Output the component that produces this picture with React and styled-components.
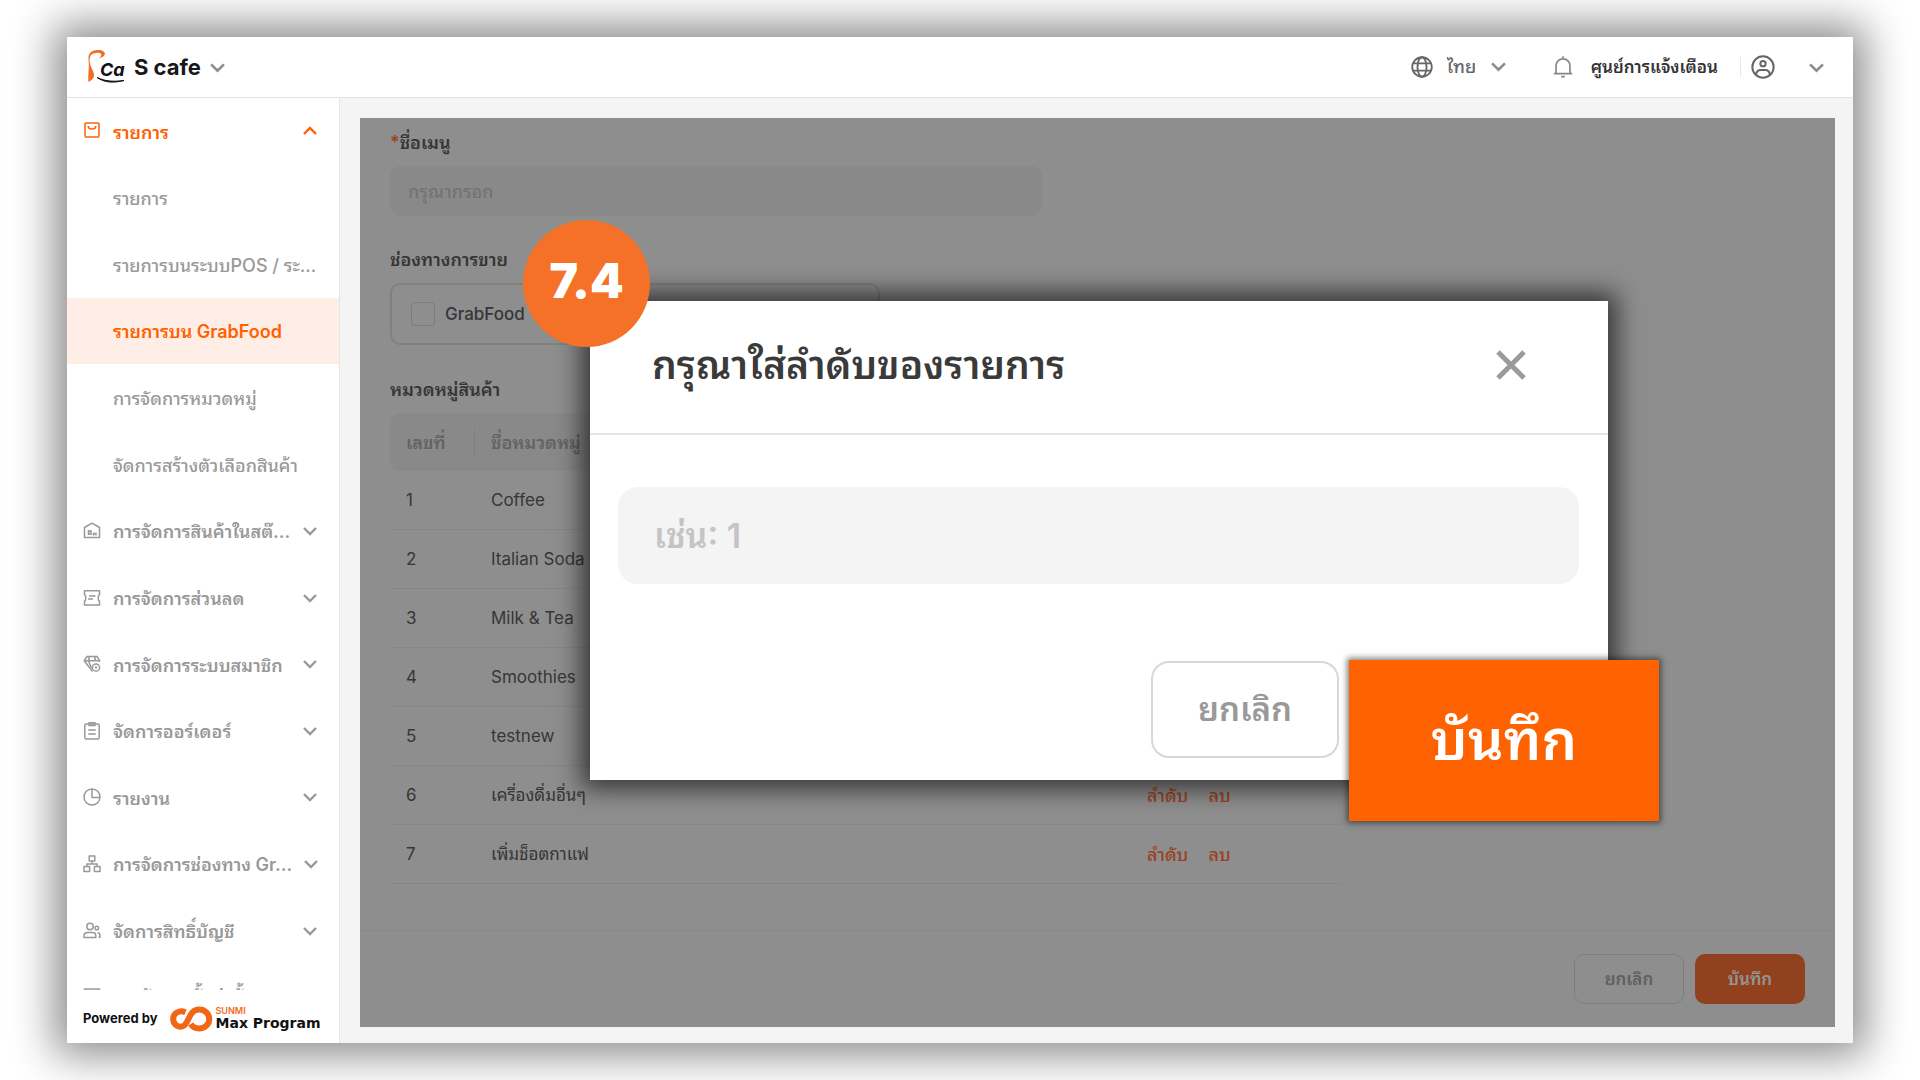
import React from 'react';
import styled, { createGlobalStyle } from 'styled-components';

const GlobalStyle = createGlobalStyle`
  *, *::before, *::after { box-sizing: border-box; }
  html, body, #root { height: 100%; }
  body {
    margin: 0;
    background: #fff;
    font-family: Inter, "Noto Sans Thai Looped", Loma, Umpush, Waree, Garuda, "Noto Sans Thai", "Noto Sans", sans-serif;
    font-size: 18px;
    line-height: 1.3;
    color: #363636;
    overflow: hidden;
  }
  button, input, select { font: inherit; color: inherit; margin: 0; }
  button { cursor: pointer; }
  h2, p { margin: 0; }
`;

const Page = styled.div`
  position: relative;
  height: 100%;
  padding: 37px 67px;
`;

const AppWindow = styled.div`
  display: flex;
  flex-direction: column;
  height: 100%;
  background: #fff;
  box-shadow: 0 0 40px 12px rgba(0, 0, 0, 0.46);
`;

const Header = styled.header`
  display: flex;
  align-items: center;
  justify-content: space-between;
  flex: 0 0 61px;
  padding: 0 29px 0 20px;
  border-bottom: 1px solid #e2e2e2;
`;

const PlainButton = styled.button`
  display: flex;
  align-items: center;
  gap: ${(p) => p.$gap || 0}px;
  padding: 0;
  border: 0;
  background: none;
  color: ${(p) => p.$color || 'inherit'};
  font-size: 17px;
  font-weight: ${(p) => p.$weight || 500};
`;

const StoreName = styled.span`
  font-size: 22px;
  font-weight: 700;
  color: #17181a;
`;

const HeaderActions = styled.div`
  display: flex;
  align-items: center;
`;

const Language = styled.label`
  display: flex;
  align-items: center;
  gap: 14px;
  color: #666;
  margin-right: 46px;
`;

const LanguageSelect = styled.select`
  appearance: none;
  width: 30px;
  padding: 0;
  border: 0;
  background: none;
  font-weight: 500;
`;

const Divider = styled.span`
  width: 1px;
  height: 20px;
  margin: 0 10px 0 22px;
  background: #e8e8e8;
`;

const Body = styled.div`
  display: flex;
  flex: 1;
  min-height: 0;
`;

const Sidebar = styled.aside`
  display: flex;
  flex-direction: column;
  flex: 0 0 273px;
  border-right: 1px solid #e6e6e6;
`;

const Nav = styled.nav`
  display: grid;
  grid-template-rows: repeat(13, minmax(0, 1fr)) 26px;
  flex: 1;
  min-height: 0;
`;

const NavItem = styled.a`
  display: grid;
  grid-template-columns: 18px 1fr 14px;
  align-items: center;
  column-gap: 12px;
  padding: 0 22px 0 16px;
  overflow: hidden;
  white-space: nowrap;
  text-decoration: none;
  font-weight: ${(p) => (p.$sub ? 500 : 600)};
  color: ${(p) => (p.$active ? '#ff6000' : '#999')};
  background: ${(p) => (p.$selected ? '#ffeee5' : 'transparent')};
  ${(p) => p.$selected && 'font-weight: 600;'}
  ${(p) => p.$clipped && 'align-items: start; line-height: 26px; padding-top: 18px;'}
`;

const NavText = styled.span`
  grid-column: 2 / ${(p) => (p.$wide ? 4 : 3)};
  padding-top: 2px;
`;

const Powered = styled.footer`
  display: flex;
  align-items: center;
  gap: 12px;
  flex: 0 0 53px;
  padding: 4px 0 0 16px;
  font-size: 13px;
  font-weight: 700;
  color: #111;
`;

const Brand = styled.div`
  display: flex;
  align-items: center;
  gap: 2px;
`;

const BrandText = styled.div`
  display: flex;
  flex-direction: column;
  font-family: "DejaVu Sans", sans-serif;
  font-size: 14px;
  line-height: 16px;
  font-weight: 700;
`;

const BrandSmall = styled.span`
  font-family: Inter, sans-serif;
  font-size: 9px;
  line-height: 8px;
  font-weight: 600;
  color: #f26a1b;
`;

const Main = styled.main`
  display: flex;
  flex: 1;
  min-width: 0;
  padding: 20px 18px 16px 20px;
  background: #f4f4f4;
`;

const Panel = styled.section`
  display: flex;
  flex-direction: column;
  flex: 1;
  min-width: 0;
  background: #8e8e8e;
  color: #363636;
`;

const Form = styled.form`
  flex: 1;
  padding: 12px 30px 0;
`;

const Label = styled.label`
  display: block;
  height: 26px;
  line-height: 26px;
  font-weight: 600;
`;

const Required = styled.span`
  color: #a1431a;
`;

const MenuInput = styled.input`
  display: block;
  width: 652px;
  height: 50px;
  margin: 10px 0 31px;
  padding: 0 18px;
  border: 0;
  border-radius: 10px;
  background: #898989;
  font-weight: 500;
  &::placeholder { color: #737373; opacity: 1; }
`;

const Channel = styled.label`
  display: flex;
  align-items: center;
  gap: 10px;
  width: 490px;
  height: 62px;
  margin: 10px 0 32px;
  padding: 0 19px;
  border: 2px solid #808080;
  border-radius: 10px;
  font-size: 17px;
  font-weight: 500;
`;

const Check = styled.input`
  appearance: none;
  width: 24px;
  height: 24px;
  border: 1px solid #7c7c7c;
  border-radius: 4px;
`;

const Table = styled.table`
  width: 952px;
  margin-top: 10px;
  border-collapse: separate;
  border-spacing: 0;
  table-layout: fixed;
`;

const Th = styled.th`
  width: ${(p) => p.$width};
  height: 58px;
  padding: 2px 16px 0;
  background: #898989;
  color: #636363;
  font-weight: 600;
  text-align: left;
  &:first-child {
    border-radius: 10px 0 0 10px;
    background: linear-gradient(#808080, #808080) right center / 1px 28px no-repeat #898989;
  }
  &:last-child { border-radius: 0 10px 10px 0; }
`;

const Td = styled.td`
  height: 59px;
  padding: 1px 16px 0;
  border-bottom: 1px solid #868686;
  font-size: 17px;
  font-weight: 400;
`;

const RowLink = styled.a`
  margin-right: 20px;
  font-size: 18px;
  font-weight: 500;
  color: #96441f;
  text-decoration: none;
`;

const PanelFooter = styled.footer`
  display: flex;
  justify-content: flex-end;
  gap: 11px;
  padding: 23px 30px;
  border-top: 1px solid #888;
`;

const FooterButton = styled.button`
  width: 110px;
  height: 50px;
  padding: 0;
  border: ${(p) => (p.$primary ? '0' : '1px solid #7d7d7d')};
  border-radius: 10px;
  background: ${(p) => (p.$primary ? '#91411d' : 'transparent')};
  color: ${(p) => (p.$primary ? '#959595' : '#606060')};
  font-size: 17px;
  font-weight: 600;
`;

const Modal = styled.div`
  position: absolute;
  top: 301px;
  left: 590px;
  right: 312px;
  height: 479px;
  display: flex;
  flex-direction: column;
  background: #fff;
  box-shadow: 0 0 24px 8px rgba(0, 0, 0, 0.65);
`;

const ModalHeader = styled.div`
  display: flex;
  align-items: center;
  justify-content: space-between;
  flex: 0 0 134px;
  padding: 0 81px 4px 62px;
  border-bottom: 2px solid #e6e6e6;
`;

const ModalTitle = styled.h2`
  font-size: 39px;
  font-weight: 600;
  color: #3a3a3a;
`;

const OrderInput = styled.input`
  height: 97px;
  margin: 52px 29px 77px 28px;
  padding: 0 36px;
  border: 0;
  border-radius: 20px;
  background: #f4f4f4;
  font-size: 34px;
  font-weight: 600;
  &::placeholder { color: #c4c4c4; opacity: 1; }
`;

const CancelButton = styled.button`
  align-self: flex-end;
  width: 188px;
  height: 97px;
  margin-right: 269px;
  border: 2px solid #d8d8d8;
  border-radius: 18px;
  background: #fff;
  color: #999;
  font-size: 33px;
  font-weight: 600;
`;

const SaveButton = styled.button`
  position: absolute;
  right: -51px;
  bottom: -41px;
  width: 310px;
  height: 161px;
  border: 0;
  background: #ff6200;
  box-shadow: 0 0 6px 2px rgba(0, 0, 0, 0.5);
  color: #fff;
  font-size: 56px;
  font-weight: 600;
`;

const StepBadge = styled.div`
  position: absolute;
  top: 220px;
  left: 523px;
  display: grid;
  place-items: center;
  width: 127px;
  height: 127px;
  padding-bottom: 4px;
  border-radius: 50%;
  background: #f47127;
  color: #fff;
  font-size: 48px;
  font-weight: 900;
`;

const Icon = ({ size = 18, width = 1.5, children, color = 'currentColor' }) => (
  <svg width={size} height={size} viewBox="0 0 18 18" fill="none" stroke={color} strokeWidth={width} strokeLinejoin="round" aria-hidden="true">
    {children}
  </svg>
);

const Chevron = ({ up, size = 14, color = 'currentColor' }) => (
  <svg width={size} height={size} viewBox="0 0 14 14" fill="none" stroke={color} strokeWidth="2.4" aria-hidden="true">
    <path d={up ? 'M1 10l6-6 6 6' : 'M1 4l6 6 6-6'} />
  </svg>
);

const icons = {
  bag: <><rect x="2" y="1" width="14" height="14" rx="1" /><path d="M5.500 4v1c0 1.200 1.500 2 3.500 2s3.500-.8 3.500-2V4" /></>,
  store: <><path d="M1.500 15.500v-10L9 1.200l7.500 4.300v10z" /><path d="M5 9h3M5 12h3M10.500 12H13M5.500 8v5M8 8v5M10.500 10.500v3M13 10.500v3" /></>,
  coupon: <><path d="M1.500 1.800h15v3.700c-1.700.8-1.700 6 0 6.800V16h-15v-3.700c1.700-.8 1.700-6 0-6.800z" /><path d="M6 7h6.500M5 10h5" /></>,
  gem: <><path d="M9.500 16.500L1.200 5.800 4 1.500h10l2.800 4.300-.8 1M1.200 5.800h15.600M6.500 1.500L5.500 6l3 7M11.500 1.500l1 4" /><circle cx="13" cy="12.500" r="3.600" /><circle cx="13" cy="12.500" r=".5" /></>,
  orders: <><rect x="1.800" y="2" width="14.400" height="15" rx="1.500" /><path d="M6 .8h6v2.700H6zM5.200 8h7.600M5.200 12h7.600" /></>,
  report: <><circle cx="9" cy="9" r="8" /><path d="M9 1v8.500h8" /></>,
  channel: <><rect x="6.200" y="1" width="5.600" height="5" /><rect x="1" y="11.500" width="5.600" height="5" /><rect x="11.400" y="11.500" width="5.600" height="5" /><path d="M9 6v3M3.800 11.500V9h10.400v2.500" /></>,
  users: <><circle cx="7" cy="4.500" r="3.200" /><path d="M1 15.500v-1.700c0-2 1.500-3.300 3.500-3.300h5c2 0 3.300 1.300 3.300 3.300v1.700z" /><circle cx="13.800" cy="6" r="1.800" /><path d="M14.500 10.500c1.700.3 2.500 1.500 2.500 3v1.700h-1.500" /></>,
  box: <path d="M1.500 18V7h15v11" />,
};

const menu = [
  { text: 'รายการ', icon: 'bag', active: true, up: true },
  { text: 'รายการ', sub: true },
  { text: 'รายการบนระบบPOS / ระ...', sub: true },
  { text: 'รายการบน GrabFood', sub: true, active: true, selected: true },
  { text: 'การจัดการหมวดหมู่', sub: true },
  { text: 'จัดการสร้างตัวเลือกสินค้า', sub: true },
  { text: 'การจัดการสินค้าในสต๊...', icon: 'store' },
  { text: 'การจัดการส่วนลด', icon: 'coupon' },
  { text: 'การจัดการระบบสมาชิก', icon: 'gem' },
  { text: 'จัดการออร์เดอร์', icon: 'orders' },
  { text: 'รายงาน', icon: 'report' },
  { text: 'การจัดการช่องทาง Gr...', icon: 'channel' },
  { text: 'จัดการสิทธิ์บัญชี', icon: 'users' },
  { text: 'การจัดการตั้งค่าทั้งหมด', icon: 'box', clipped: true },
];

const categories = ['Coffee', 'Italian Soda', 'Milk & Tea', 'Smoothies', 'testnew', 'เครื่องดื่มอื่นๆ', 'เพิ่มช็อตกาแฟ'];

const StoreLogo = () => (
  <svg width="38" height="36" viewBox="0 0 38 36" aria-hidden="true">
    <path d="M1.500 33C.8 25 2.500 20 1.500 10 1 4 5 1 11 1c4 0 7 1.500 6.800 4-.3 2.500-3.500 4-6 3.800 2-1 3.200-2.600 2-4C12 3 6 3.500 3.500 6.500 1.800 11 2.500 15 5 20c3.500 6 2.500 10-3.500 13z" fill="#f36c1f" />
    <text x="13" y="27" fontFamily="Inter, sans-serif" fontStyle="italic" fontWeight="700" fontSize="18" fill="#111">Ca</text>
    <path d="M10 28.500c8 5.500 17 5.500 27 3-10 1.200-18 1.200-27-3z" fill="#111" stroke="#111" strokeWidth="1" />
  </svg>
);

const BrandLogo = () => (
  <svg width="44" height="26" viewBox="0 0 44 26" fill="none" stroke="#f26716" strokeWidth="6" aria-hidden="true">
    <path d="M15.500 6.200C9 3.500 3.200 7.500 3.200 13c0 6 5.500 9 10 7 6-2.500 5.500-16.500 16-16.500 5.500 0 10 4 10 9.500s-4.500 9.500-10 9.500c-4 0-7-2-8.500-4.500" />
  </svg>
);

export default function App() {
  return (
    <Page>
      <GlobalStyle />
      <AppWindow>
        <Header>
          <PlainButton type="button" $gap={9} $color="#8c8c8c">
            <StoreLogo />
            <StoreName>S cafe</StoreName>
            <Chevron size={15} />
          </PlainButton>
          <HeaderActions>
            <Language>
              <Icon size={22} width={1.5}>
                <circle cx="9" cy="9" r="8" />
                <ellipse cx="9" cy="9" rx="3.700" ry="8" />
                <path d="M1.700 6h14.600M1.700 12h14.600" />
              </Icon>
              <LanguageSelect aria-label="ภาษา" defaultValue="th">
                <option value="th">ไทย</option>
              </LanguageSelect>
              <Chevron size={15} color="#8c8c8c" />
            </Language>
            <PlainButton type="button" $gap={17} $color="#333" $weight={600}>
              <Icon size={22} width={1.400} color="#888">
                <path d="M1.500 14.500h15M3.300 14.500V8.300C3.300 4.800 5.700 2.300 9 2.300s5.700 2.500 5.700 6v6.200M9 .3v2M7.500 16.800h3" />
              </Icon>
              ศูนย์การแจ้งเตือน
            </PlainButton>
            <Divider />
            <PlainButton type="button" aria-label="บัญชีผู้ใช้" $gap={34} $color="#666">
              <Icon size={24} width={1.500}>
                <circle cx="9" cy="9" r="8" />
                <circle cx="9" cy="6.500" r="2" />
                <path d="M3.800 14.800c.3-2.500 1.500-3.500 3.500-3.500h3.400c2 0 3.200 1 3.500 3.500" />
              </Icon>
              <Chevron size={15} color="#8c8c8c" />
            </PlainButton>
          </HeaderActions>
        </Header>
        <Body>
          <Sidebar>
            <Nav>
              {menu.map((m, i) => (
                <NavItem key={i} href="#" $sub={m.sub} $active={m.active} $selected={m.selected} $clipped={m.clipped}>
                  {m.icon && <Icon size={18}>{icons[m.icon]}</Icon>}
                  <NavText $wide={m.sub}>{m.text}</NavText>
                  {!m.sub && !m.clipped && <Chevron up={m.up} />}
                </NavItem>
              ))}
            </Nav>
            <Powered>
              Powered by
              <Brand>
                <BrandLogo />
                <BrandText>
                  <BrandSmall>SUNMI</BrandSmall>
                  Max Program
                </BrandText>
              </Brand>
            </Powered>
          </Sidebar>
          <Main>
            <Panel>
              <Form onSubmit={(e) => e.preventDefault()}>
                <Label htmlFor="menu-name"><Required>*</Required>ชื่อเมนู</Label>
                <MenuInput id="menu-name" placeholder="กรุณากรอก" />
                <Label as="p">ช่องทางการขาย</Label>
                <Channel>
                  <Check type="checkbox" />
                  GrabFood
                </Channel>
                <Label as="p">หมวดหมู่สินค้า</Label>
                <Table>
                  <thead>
                    <tr>
                      <Th $width="85px">เลขที่</Th>
                      <Th $width="656px">ชื่อหมวดหมู่</Th>
                      <Th />
                    </tr>
                  </thead>
                  <tbody>
                    {categories.map((name, i) => (
                      <tr key={name}>
                        <Td>{i + 1}</Td>
                        <Td>{name}</Td>
                        <Td>
                          <RowLink href="#">ลำดับ</RowLink>
                          <RowLink href="#">ลบ</RowLink>
                        </Td>
                      </tr>
                    ))}
                  </tbody>
                </Table>
              </Form>
              <PanelFooter>
                <FooterButton type="button">ยกเลิก</FooterButton>
                <FooterButton type="button" $primary>บันทึก</FooterButton>
              </PanelFooter>
            </Panel>
          </Main>
        </Body>
      </AppWindow>
      <Modal role="dialog" aria-labelledby="order-title">
        <ModalHeader>
          <ModalTitle id="order-title">กรุณาใส่ลำดับของรายการ</ModalTitle>
          <PlainButton type="button" aria-label="ปิด" $color="#9b9999">
            <svg width="32" height="32" viewBox="0 0 32 32" stroke="currentColor" strokeWidth="5" aria-hidden="true">
              <path d="M3 3l26 26M29 3L3 29" />
            </svg>
          </PlainButton>
        </ModalHeader>
        <OrderInput aria-labelledby="order-title" placeholder="เช่น: 1" />
        <CancelButton type="button">ยกเลิก</CancelButton>
        <SaveButton type="button">บันทึก</SaveButton>
      </Modal>
      <StepBadge>7.4</StepBadge>
    </Page>
  );
}
